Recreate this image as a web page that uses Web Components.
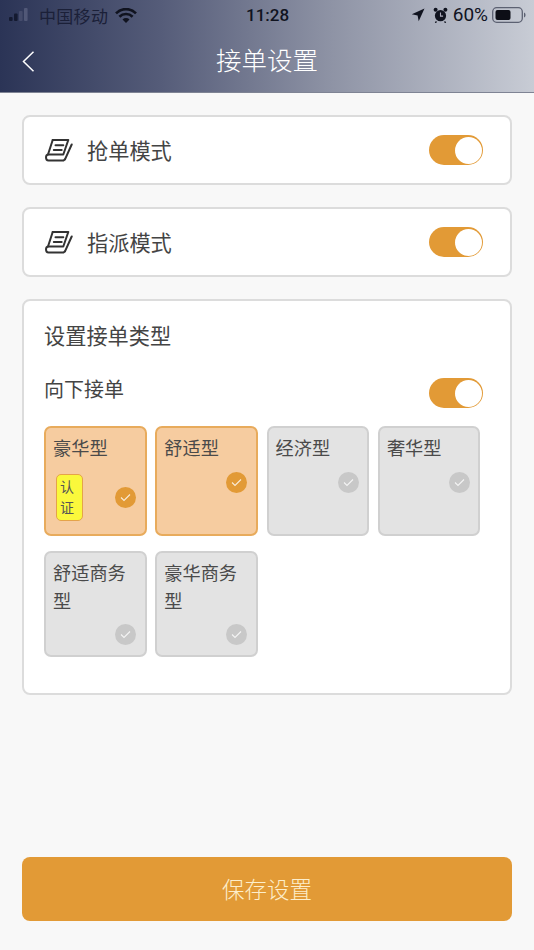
<!DOCTYPE html>
<html lang="zh"><head><meta charset="utf-8">
<style>
html,body{margin:0;padding:0;height:100%}
body{font-family:"Noto Sans CJK SC","Noto Sans",sans-serif;background:#f8f8f8;color:#444}
app-page{height:950px}
</style></head><body>
<app-page>
  <nav-header slot="header" title-text="接单设置"></nav-header>
  <mode-card label="抢单模式"></mode-card>
  <mode-card label="指派模式"></mode-card>
  <type-panel>
    <type-chip selected verified>豪华型</type-chip>
    <type-chip selected>舒适型</type-chip>
    <type-chip>经济型</type-chip>
    <type-chip>奢华型</type-chip>
    <type-chip short>舒适商务型</type-chip>
    <type-chip short>豪华商务型</type-chip>
  </type-panel>
  <save-button slot="footer">保存设置</save-button>
</app-page>
<script>
function def(name, css, html){
  customElements.define(name, class extends HTMLElement{
    connectedCallback(){
      if(this.shadowRoot) return;
      const r=this.attachShadow({mode:'open'});
      r.innerHTML='<style>'+css+'</style>'+(typeof html==='function'?html(this):html);
    }
  });
}
const sw='<tog-switch></tog-switch>';
def('app-page',`:host{display:flex;flex-direction:column;width:534px;background:#f8f8f8}
 main{flex:1;display:flex;flex-direction:column;gap:22px;padding:22px 22px 0}
 footer{padding:0 22px 29px}`,
 `<slot name="header"></slot><main><slot></slot></main><footer><slot name="footer"></slot></footer>`);
def('nav-header',`:host{display:block;height:93px;box-sizing:border-box;background:linear-gradient(90deg,#2b3456 0%,#555c79 30%,#8e93a5 62%,#c8ccd5 100%);border-bottom:1px solid #7f8494}
 .status{height:30px;display:flex;align-items:center;padding:0 8px 0 9px;font-size:17px;position:relative}
 .left{display:flex;align-items:center;color:#1b2038}
 .carrier{margin-left:8px;letter-spacing:.3px}
 .wifi{margin-left:7px}
 .time{position:absolute;left:246px;top:3px;font:500 17px/24px "Roboto","Inter",sans-serif;color:#10131f}
 .right{margin-left:auto;display:flex;align-items:center;font:400 19px/24px "Roboto","Inter",sans-serif;color:#10131f}
 .nav{height:62px;display:flex;align-items:center;justify-content:center;position:relative;color:#fff;font-size:25.500px;font-weight:300;padding-bottom:5px;box-sizing:border-box}
 .back{position:absolute;left:22px;top:21px}
 svg{display:block}`,
 h=>`<div class="status"><div class="left">
 <svg width="22" height="14" viewBox="0 0 22 14"><rect x="0" y="9" width="3.600" height="4" rx="1" fill="#141a30"/><rect x="5" y="5.500" width="3.600" height="7.500" rx="1" fill="#141a30"/><rect x="10" y="3" width="3.600" height="10" rx="1" fill="#454c6c"/><rect x="15" y="0" width="3.600" height="13" rx="1" fill="#515877"/></svg>
 <span class="carrier">中国移动</span>
 <svg class="wifi" width="22" height="15" viewBox="0 0 22 15"><path d="M1 5.300a14 14 0 0 1 20 0" fill="none" stroke="#10131f" stroke-width="2.600"/><path d="M4.400 8.700a9.400 9.400 0 0 1 13.200 0" fill="none" stroke="#10131f" stroke-width="2.600"/><path d="M7.500 11.400a5 5 0 0 1 7 0L11 15z" fill="#10131f"/></svg>
 </div><span class="time">11:28</span>
 <div class="right">
 <svg width="14" height="14" viewBox="0 0 14 14" style="margin-right:8px"><path d="M13.500 .5 .8 6.300 6.600 7.400 7.700 13.200z" fill="#10131f"/></svg>
 <svg width="15" height="16" viewBox="0 0 15 16" style="margin-right:5px"><circle cx="7.500" cy="8.700" r="5.600" fill="#10131f"/><circle cx="2.600" cy="2.800" r="2" fill="#10131f"/><circle cx="12.400" cy="2.800" r="2" fill="#10131f"/><path d="M3.500 14.500 2.300 15.800M11.500 14.500l1.200 1.300" stroke="#10131f" stroke-width="1.300"/><path d="M7.500 5.500v3.600h2.600" fill="none" stroke="#aab" stroke-width="1.100"/></svg>
 <span>60%</span>
 <svg width="34" height="16" viewBox="0 0 34 16" style="margin-left:4px"><rect x=".7" y=".7" width="29.600" height="14.600" rx="4" fill="none" stroke="#5c6172" stroke-width="1.300"/><rect x="3.500" y="3" width="15" height="10" rx="2" fill="#0c0e16"/><path d="M32 5.500c1.200.5 1.500 1.400 1.500 2.500s-.3 2-1.500 2.500z" fill="#5c6172"/></svg>
 </div></div>
 <div class="nav"><svg class="back" width="13" height="21" viewBox="0 0 13 21"><path d="M11.500 .8 1.500 10.500l10 9.700" fill="none" stroke="#fff" stroke-width="1.500"/></svg>${h.getAttribute('title-text')}</div>`);
def('tog-switch',`:host{display:block;width:54px;height:30px;box-sizing:border-box;border-radius:15px;background:#e29a36;position:relative;flex:none}
 i{position:absolute;right:1.500px;top:1.500px;width:27px;height:27px;border-radius:50%;background:#fff}`,'<i></i>');
def('book-icon',`:host{display:block;width:28px;height:23px;flex:none}svg{display:block}`,
 `<svg width="28" height="23" viewBox="0 0 28 23" fill="none" stroke="#333" stroke-width="2" stroke-linejoin="round" stroke-linecap="round"><path d="M7.700 1H23.300L18.300 15.500H3.500C1.800 15.500 1 16.800 1 18.300S1.800 21.500 3.500 21.500H18.500L20 20.300"/><path d="M7.700 1 3 15.500"/><path d="M26.700 5.500 20 20.300"/><path d="M10.500 6.300H18.300M8.800 11H16.700"/></svg>`);
def('mode-card',`:host{display:flex;align-items:center;height:70px;box-sizing:border-box;background:#fff;border:2px solid #dcdcdc;border-radius:8px;padding:0 27px 0 21px;font-size:21.200px;color:#444}
 span{margin-left:14px;flex:1;line-height:28px}`,
 h=>`<book-icon></book-icon><span>${h.getAttribute('label')}</span>${sw}`);
def('type-panel',`:host{display:block;height:396px;box-sizing:border-box;background:#fff;border:2px solid #dcdcdc;border-radius:8px;padding:19px 27px 0 20px;font-size:21.200px;color:#444}
 .t{line-height:30px}
 .row{display:flex;align-items:flex-start;justify-content:space-between;margin-top:24px;height:52px}
 .row span{font-size:20px;line-height:30px}
 .row tog-switch{margin-top:4px}
 .grid{display:grid;grid-template-columns:repeat(4,102.500px);column-gap:8.800px;row-gap:15px}`,
 `<div class="t">设置接单类型</div><div class="row"><span>向下接单</span>${sw}</div><div class="grid"><slot></slot></div>`);
def('type-chip',`:host{display:block;height:110px;box-sizing:border-box;background:#e3e3e3;border:2px solid #d0d0d0;border-radius:7px;padding:5px 7px 0;font-size:18.200px;line-height:28px;color:#4a4a4a;position:relative}
 :host([selected]){background:#f6cca0;border-color:#e8ab5c}
 :host([short]){height:106px}
 .c{position:absolute;right:8.500px;top:44px;width:21px;height:21px;border-radius:50%;background:#c8c8c8;display:block}
 :host([selected]) .c{background:#e29a36}
 :host([verified]) .c{top:59px}
 :host([short]) .c{top:71px}
 .c svg{position:absolute;left:5px;top:6px}
 .b{position:absolute;left:10px;top:46px;width:27px;height:47px;box-sizing:border-box;background:#faf83c;border:1.500px solid #e5a34a;border-radius:5px;font-size:14px;line-height:21px;text-align:left;padding:1px 0 0 3px;color:#555}`,
 h=>`<slot></slot>${h.hasAttribute('verified')?'<div class="b">认<br>证</div>':''}<span class="c"><svg width="11" height="9" viewBox="0 0 11 9"><path d="M1 4.500 4 7.500 10 1.500" fill="none" stroke="rgba(255,255,255,.8)" stroke-width="1.100"/></svg></span>`);
def('save-button',`:host{display:flex;align-items:center;justify-content:center;height:64px;box-sizing:border-box;padding-bottom:3px;background:#e29a36;border-radius:8px;color:#fdeecb;font-size:22.500px;font-weight:300}`,'<slot></slot>');
</script>
</body></html>
